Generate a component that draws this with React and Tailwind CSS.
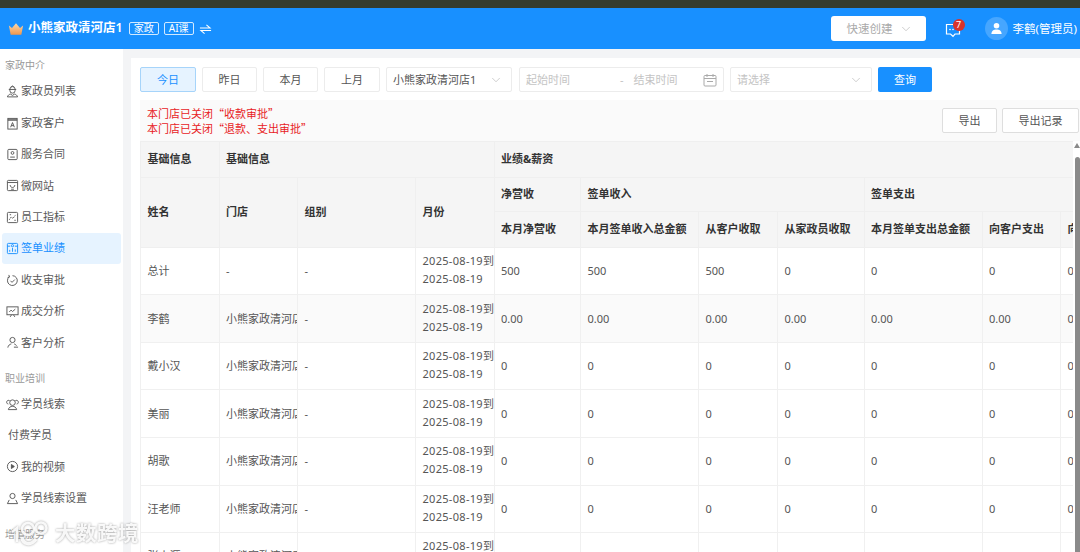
import React from 'react';
import { ChevronDown } from 'lucide-react';

const FONT = '"Noto Sans", "Noto Sans CJK SC", sans-serif';
const CJK = '"Noto Sans CJK SC", sans-serif';

const Ico = ({ children, className = 'text-[#555]' }) => (
    <svg viewBox="0 0 14 14" fill="none" stroke="currentColor" strokeWidth="1" className={`w-[13px] h-[13px] shrink-0 ${className}`}>
        {children}
    </svg>
);

const icons = {
    hat: <><path d="M4.200 4.500a2.800 2.800 0 0 1 5.600 0v1.500a2.800 2.800 0 0 1-5.600 0z" /><path d="M3 4.800h8M5.500 2.200 7 1l1.500 1.200" /><path d="M1.500 12.800c.6-1.800 2-2.800 3.300-3L7 11.200l2.200-1.400c1.300.2 2.700 1.200 3.300 3z" /></>,
    contact: <><rect x="2" y="1.500" width="10" height="11.500" /><path d="M2 3.200h10" strokeWidth="1.600" /><path d="M5 11 7 6l2 5M5.700 9.300h2.600" /></>,
    contract: <><rect x="2" y="1.500" width="10" height="11" rx="1" /><circle cx="7" cy="5.300" r="1.500" /><path d="M4.500 9.800h5" /></>,
    site: <><rect x="1.500" y="1.500" width="11" height="11" rx="1" /><path d="M1.500 3.800h11M4.500 6.500c0 3.500 5 3.500 5 0M5.500 11h3" /></>,
    chart: <><rect x="1.500" y="1.500" width="11" height="11" rx="1" /><path d="M3.500 9.500l2-3 2 1.500 3-4M4 4h2M9 10h1.500" strokeDasharray="1.500 .7" /></>,
    sign: <><rect x="1.500" y="1.500" width="11" height="11" rx="1" /><path d="M1.500 4.500h3M9.500 4.500h3M4 10.500V8.500M7 10.500V6.500M10 10.500V8" /><circle cx="7" cy="4" r="1.200" /></>,
    audit: <><path d="M3.500 3 A5.300 5.300 0 1 0 7 1.800" /><path d="M3 1l.8 2.200-2 .6M4.800 7.300 6.500 9l3-3" /></>,
    deal: <><rect x="1" y="2" width="12" height="8.500" /><path d="M3.500 7.500l2-2 1.500 1.500 3-2.500M4.500 12.800l1.500-2.300M9.500 12.800 8 10.500" /></>,
    customer: <><circle cx="7" cy="4.300" r="2.800" /><path d="M2 12.500c.3-2.400 2-3.600 3.800-4M8.800 8.500c1.200.3 2 1 2.500 2M8.500 12h4.500" /></>,
    leads: <><circle cx="7" cy="5" r="3" /><path d="M4 3A2 2 0 1 0 2.500 6.500M10 3a2 2 0 1 1 1.500 3.500M2.500 12.500C3 10 5 9 7 9s4 1 4.500 3.500z" /></>,
    play: <><circle cx="7" cy="7" r="5.500" /><path d="M5.800 4.800v4.400L9 7z" fill="currentColor" /></>,
    setting: <><circle cx="7" cy="4.300" r="2.800" /><path d="M3.500 8.500 1.500 12.500h11l-2-4" /></>,
};

const menuOne = [
    ['家政员列表', 'hat'], ['家政客户', 'contact'], ['服务合同', 'contract'], ['微网站', 'site'], ['员工指标', 'chart'],
    ['签单业绩', 'sign', true], ['收支审批', 'audit'], ['成交分析', 'deal'], ['客户分析', 'customer'],
];
const menuTwo = [['学员线索', 'leads'], ['付费学员', null], ['我的视频', 'play'], ['学员线索设置', 'setting']];

const MenuItem = ({ label, icon, active }) => (
    <div className={`h-[31.400px] mx-[2px] px-[4px] flex items-center gap-[2px] rounded-[3px] text-[11px] ${active ? 'bg-[#e6f3ff] text-[#1890ff]' : 'text-[#595959]'}`}>
        {icon ? <Ico className={active ? 'text-[#1890ff]' : 'text-[#555]'}>{icons[icon]}</Ico> : null}
        <span className={icon ? '' : 'ml-[2px]'}>{label}</span>
    </div>
);

const Sidebar = () => (
    <aside className="w-[123px] shrink-0 bg-white overflow-hidden">
        <div className="h-[27px] pl-[5px] pt-[9px] text-[10px] leading-[15px] text-[#999]">家政中介</div>
        {menuOne.map(([label, icon, active]) => <MenuItem key={label} label={label} icon={icon} active={active} />)}
        <div className="h-[30px] pl-[5px] pt-[12px] text-[10px] leading-[15px] text-[#999]">职业培训</div>
        {menuTwo.map(([label, icon]) => <MenuItem key={label} label={label} icon={icon} />)}
        <div className="pl-[5px] pt-[13px] text-[10px] leading-[15px] text-[#999]">增值服务</div>
    </aside>
);

const Header = () => (
    <header className="h-[41px] shrink-0 bg-[#1890ff] flex items-center text-white">
        <svg viewBox="0 0 18 14" className="w-[16px] h-[14px] ml-[8px] mt-[1px]">
            <defs>
                <linearGradient id="crown" x1="0" y1="0" x2="0" y2="1">
                    <stop offset="0" stopColor="#f9d9ae" />
                    <stop offset="1" stopColor="#f0964a" />
                </linearGradient>
            </defs>
            <path d="M1 3l3.500 3L9 .5l4.500 5.500L17 3l-2 10.500H3z" fill="url(#crown)" />
        </svg>
        <span className="ml-[4px] text-[12.500px] font-semibold">小熊家政清河店1</span>
        <span className="ml-[6px] h-[13px] w-[30px] border border-white/80 rounded-[2px] text-[10px] leading-[11px] text-center">家政</span>
        <span className="ml-[5px] h-[13px] w-[30px] border border-white/80 rounded-[2px] text-[10px] leading-[11px] text-center">AI课</span>
        <svg viewBox="0 0 14 12" fill="none" stroke="currentColor" strokeWidth="1.100" className="w-[13px] h-[12px] ml-[5px]">
            <path d="M1 5h11L8 1.500M13 7.500H2L6 11" />
        </svg>
        <div className="ml-auto w-[95px] h-[25px] mr-[19px] pl-[3px] bg-white rounded-[3px] text-[#aaa] text-[11.500px] flex items-center justify-center gap-[6px]">
            快速创建
            <ChevronDown className="w-[14px] h-[14px]" strokeWidth={1} />
        </div>
        <div className="relative w-[16px] h-[16px] mt-[2px] mr-[24px]">
            <svg viewBox="0 0 16 16" fill="none" stroke="currentColor" strokeWidth="1.200" className="w-[16px] h-[16px]">
                <path d="M8 2.500H1.500v9.500h4L8 14.300l2-2.300h4.500V8" />
                <circle cx="5" cy="7.500" r=".8" fill="currentColor" stroke="none" />
                <circle cx="8" cy="7.500" r=".8" fill="currentColor" stroke="none" />
            </svg>
            <span className="absolute left-[8px] -top-[3px] w-[12px] h-[12px] rounded-full bg-[#d9332a] text-[9px] leading-[12px] text-center">7</span>
        </div>
        <div className="w-[23px] h-[23px] rounded-full bg-white/20 flex items-center justify-center mr-[5px]">
            <svg viewBox="0 0 14 14" fill="white" className="w-[13px] h-[13px]">
                <circle cx="7" cy="4" r="3" />
                <path d="M1.500 13c0-3.500 2.500-5 5.500-5s5.500 1.500 5.500 5z" />
            </svg>
        </div>
        <span className="text-[11.500px] mr-[3px] whitespace-nowrap">李鹤(管理员)</span>
    </header>
);

const Btn = ({ children, className = '' }) => (
    <div className={`h-[25px] border border-[#ececec] bg-white rounded-[2px] text-[11px] text-[#555] flex items-center justify-center ${className}`}>{children}</div>
);

const FilterBar = () => (
    <div className="h-[42px] shrink-0 flex items-center gap-[6px]">
        <div className="w-[56px] h-[25px] pt-[2px] border border-[#a6d4fa] bg-[#e6f3ff] rounded-[2px] text-[11px] text-[#1890ff] flex items-center justify-center">今日</div>
        <Btn className="w-[55px] pt-[2px]">昨日</Btn>
        <Btn className="w-[55px] pt-[2px]">本月</Btn>
        <Btn className="w-[56px] pt-[2px]">上月</Btn>
        <Btn className="w-[126px] !justify-between pt-[2px] pl-[6px] pr-[8px]">
            小熊家政清河店1
            <ChevronDown className="w-[14px] h-[14px] text-[#aaa]" strokeWidth={1} />
        </Btn>
        <Btn className="w-[205px] ml-[1px] !justify-start pt-[2px] pl-[6px] !text-[#c4c4c4]">
            <span>起始时间</span>
            <span className="ml-[50px]">-</span>
            <span className="ml-[10px]">结束时间</span>
            <svg viewBox="0 0 14 14" fill="none" stroke="#aaa" strokeWidth="1" className="w-[14px] h-[14px] ml-[25px]">
                <rect x="1" y="2.500" width="12" height="10.500" rx="1" />
                <path d="M1 5.500h12M4 1v3M10 1v3M4 8.500h6" />
            </svg>
        </Btn>
        <Btn className="w-[142px] !justify-between pt-[2px] pl-[6px] pr-[8px] !text-[#c4c4c4]">
            请选择
            <ChevronDown className="w-[14px] h-[14px] text-[#aaa]" strokeWidth={1} />
        </Btn>
        <div className="w-[54px] h-[25px] pt-[2px] bg-[#1890ff] rounded-[2px] text-white text-[11px] flex items-center justify-center">查询</div>
    </div>
);

const Notice = () => (
    <div className="h-[41px] shrink-0 bg-[#fafafa] flex justify-between pl-[7px] pr-[1px]">
        <div className="pt-[6px] text-[11px] leading-[15px] text-[#e8221f]" style={{ fontFamily: CJK }}>
            <p>本门店已关闭“收款审批”</p>
            <p>本门店已关闭“退款、支出审批”</p>
        </div>
        <div className="flex gap-[5px] pt-[8px]">
            <Btn className="w-[55px] pt-[1px] !border-[#dedede]">导出</Btn>
            <Btn className="w-[77px] pt-[1px] !border-[#dedede]">导出记录</Btn>
        </div>
    </div>
);

const colWidths = [78.500, 78.500, 118, 78.500, 86.500, 118, 79, 86.500, 118, 78.500, 80];

const th = 'border border-[#efefef] bg-[#f5f5f5] pl-[6.500px] text-left font-bold text-[11px] text-[#333] whitespace-nowrap overflow-hidden';
const td = 'border border-[#f0f0f0] pl-[6.500px] text-left text-[11px] leading-[18px] text-[#555] whitespace-nowrap overflow-hidden';

const STORE = '小熊家政清河店1';
const ZERO = ['0', '0', '0', '0', '0', '0', '0'];
const rows = [
    { name: '总计', store: '-', h: 47, vals: ['500', '500', '500', '0', '0', '0', '0'] },
    { name: '李鹤', store: STORE, h: 48, vals: ['0.00', '0.00', '0.00', '0.00', '0.00', '0.00', '0'], even: true },
    { name: '戴小汉', store: STORE, h: 47, vals: ZERO },
    { name: '美丽', store: STORE, h: 48, vals: ZERO },
    { name: '胡歌', store: STORE, h: 47.500, vals: ZERO },
    { name: '汪老师', store: STORE, h: 47.500, vals: ZERO },
    { name: '张小涯', store: STORE, h: 47, vals: ZERO },
];

const DataTable = () => (
    <div className="flex-1 min-h-0 overflow-hidden mr-[7px]">
        <table className="table-fixed border-collapse w-[1000px] border-t border-[#efefef]">
            <colgroup>
                {colWidths.map((w, i) => <col key={i} width={w} />)}
            </colgroup>
            <thead>
                <tr className="h-[35.500px]">
                    <th className={th}>基础信息</th>
                    <th className={th} colSpan={3}>基础信息</th>
                    <th className={th} colSpan={7}>业绩&amp;薪资</th>
                </tr>
                <tr className="h-[34.500px]">
                    <th className={th} rowSpan={2}>姓名</th>
                    <th className={th} rowSpan={2}>门店</th>
                    <th className={th} rowSpan={2}>组别</th>
                    <th className={th} rowSpan={2}>月份</th>
                    <th className={th}>净营收</th>
                    <th className={th} colSpan={3}>签单收入</th>
                    <th className={th} colSpan={3}>签单支出</th>
                </tr>
                <tr className="h-[36px]">
                    <th className={th}>本月净营收</th>
                    <th className={th}>本月签单收入总金额</th>
                    <th className={th}>从客户收取</th>
                    <th className={th}>从家政员收取</th>
                    <th className={th}>本月签单支出总金额</th>
                    <th className={th}>向客户支出</th>
                    <th className={th}>向家政员支出</th>
                </tr>
            </thead>
            <tbody>
                {rows.map((r) => (
                    <tr key={r.name} style={{ height: r.h }} className={r.even ? 'bg-[#fafafa]' : 'bg-white'}>
                        <td className={td}>{r.name}</td>
                        <td className={td}>{r.store}</td>
                        <td className={td}>-</td>
                        <td className={td}><span className="inline-block -translate-y-[1px] tracking-[0.3px]">2025-08-19到<br />2025-08-19</span></td>
                        {r.vals.map((v, i) => <td key={i} className={td}>{v}</td>)}
                    </tr>
                ))}
            </tbody>
        </table>
    </div>
);

const Watermark = () => (
    <div className="absolute left-[10px] bottom-[6px] flex items-center gap-[7px] text-white/90 drop-shadow-[0_0_1px_rgba(110,110,110,0.7)]">
        <svg viewBox="0 0 38 26" fill="none" stroke="currentColor" strokeWidth="2.500" className="w-[38px] h-[26px]">
            <path d="M2 12l5-4v14" />
            <circle cx="18" cy="9" r="6" />
            <circle cx="31" cy="8" r="5.500" />
            <path d="M12 17c1 8 9 9 14 2" strokeWidth="3.500" />
        </svg>
        <span className="text-[20.500px] leading-[26px] font-bold tracking-[0.500px]">大数跨境</span>
    </div>
);

const App = () => (
    <div className="relative w-[1080px] h-[552px] overflow-hidden flex flex-col bg-[#f3f4f6]" style={{ fontFamily: FONT }}>
        <div className="h-[8px] shrink-0 bg-[#353c2e]" />
        <Header />
        <div className="flex-1 min-h-0 flex">
            <Sidebar />
            <main className="flex-1 min-w-0 ml-[8px] mt-[9px] bg-white pl-[9px] flex flex-col relative">
                <FilterBar />
                <Notice />
                <DataTable />
                <div className="absolute right-0 top-[85px] w-0 h-0 border-x-[3px] border-x-transparent border-b-[5px] border-b-[#8a8a8a]" />
                <div className="absolute right-0 top-[99px] bottom-0 w-[5px] bg-[#8a8a8a] rounded-t-[3px]" />
            </main>
        </div>
        <Watermark />
    </div>
);

export default App;
